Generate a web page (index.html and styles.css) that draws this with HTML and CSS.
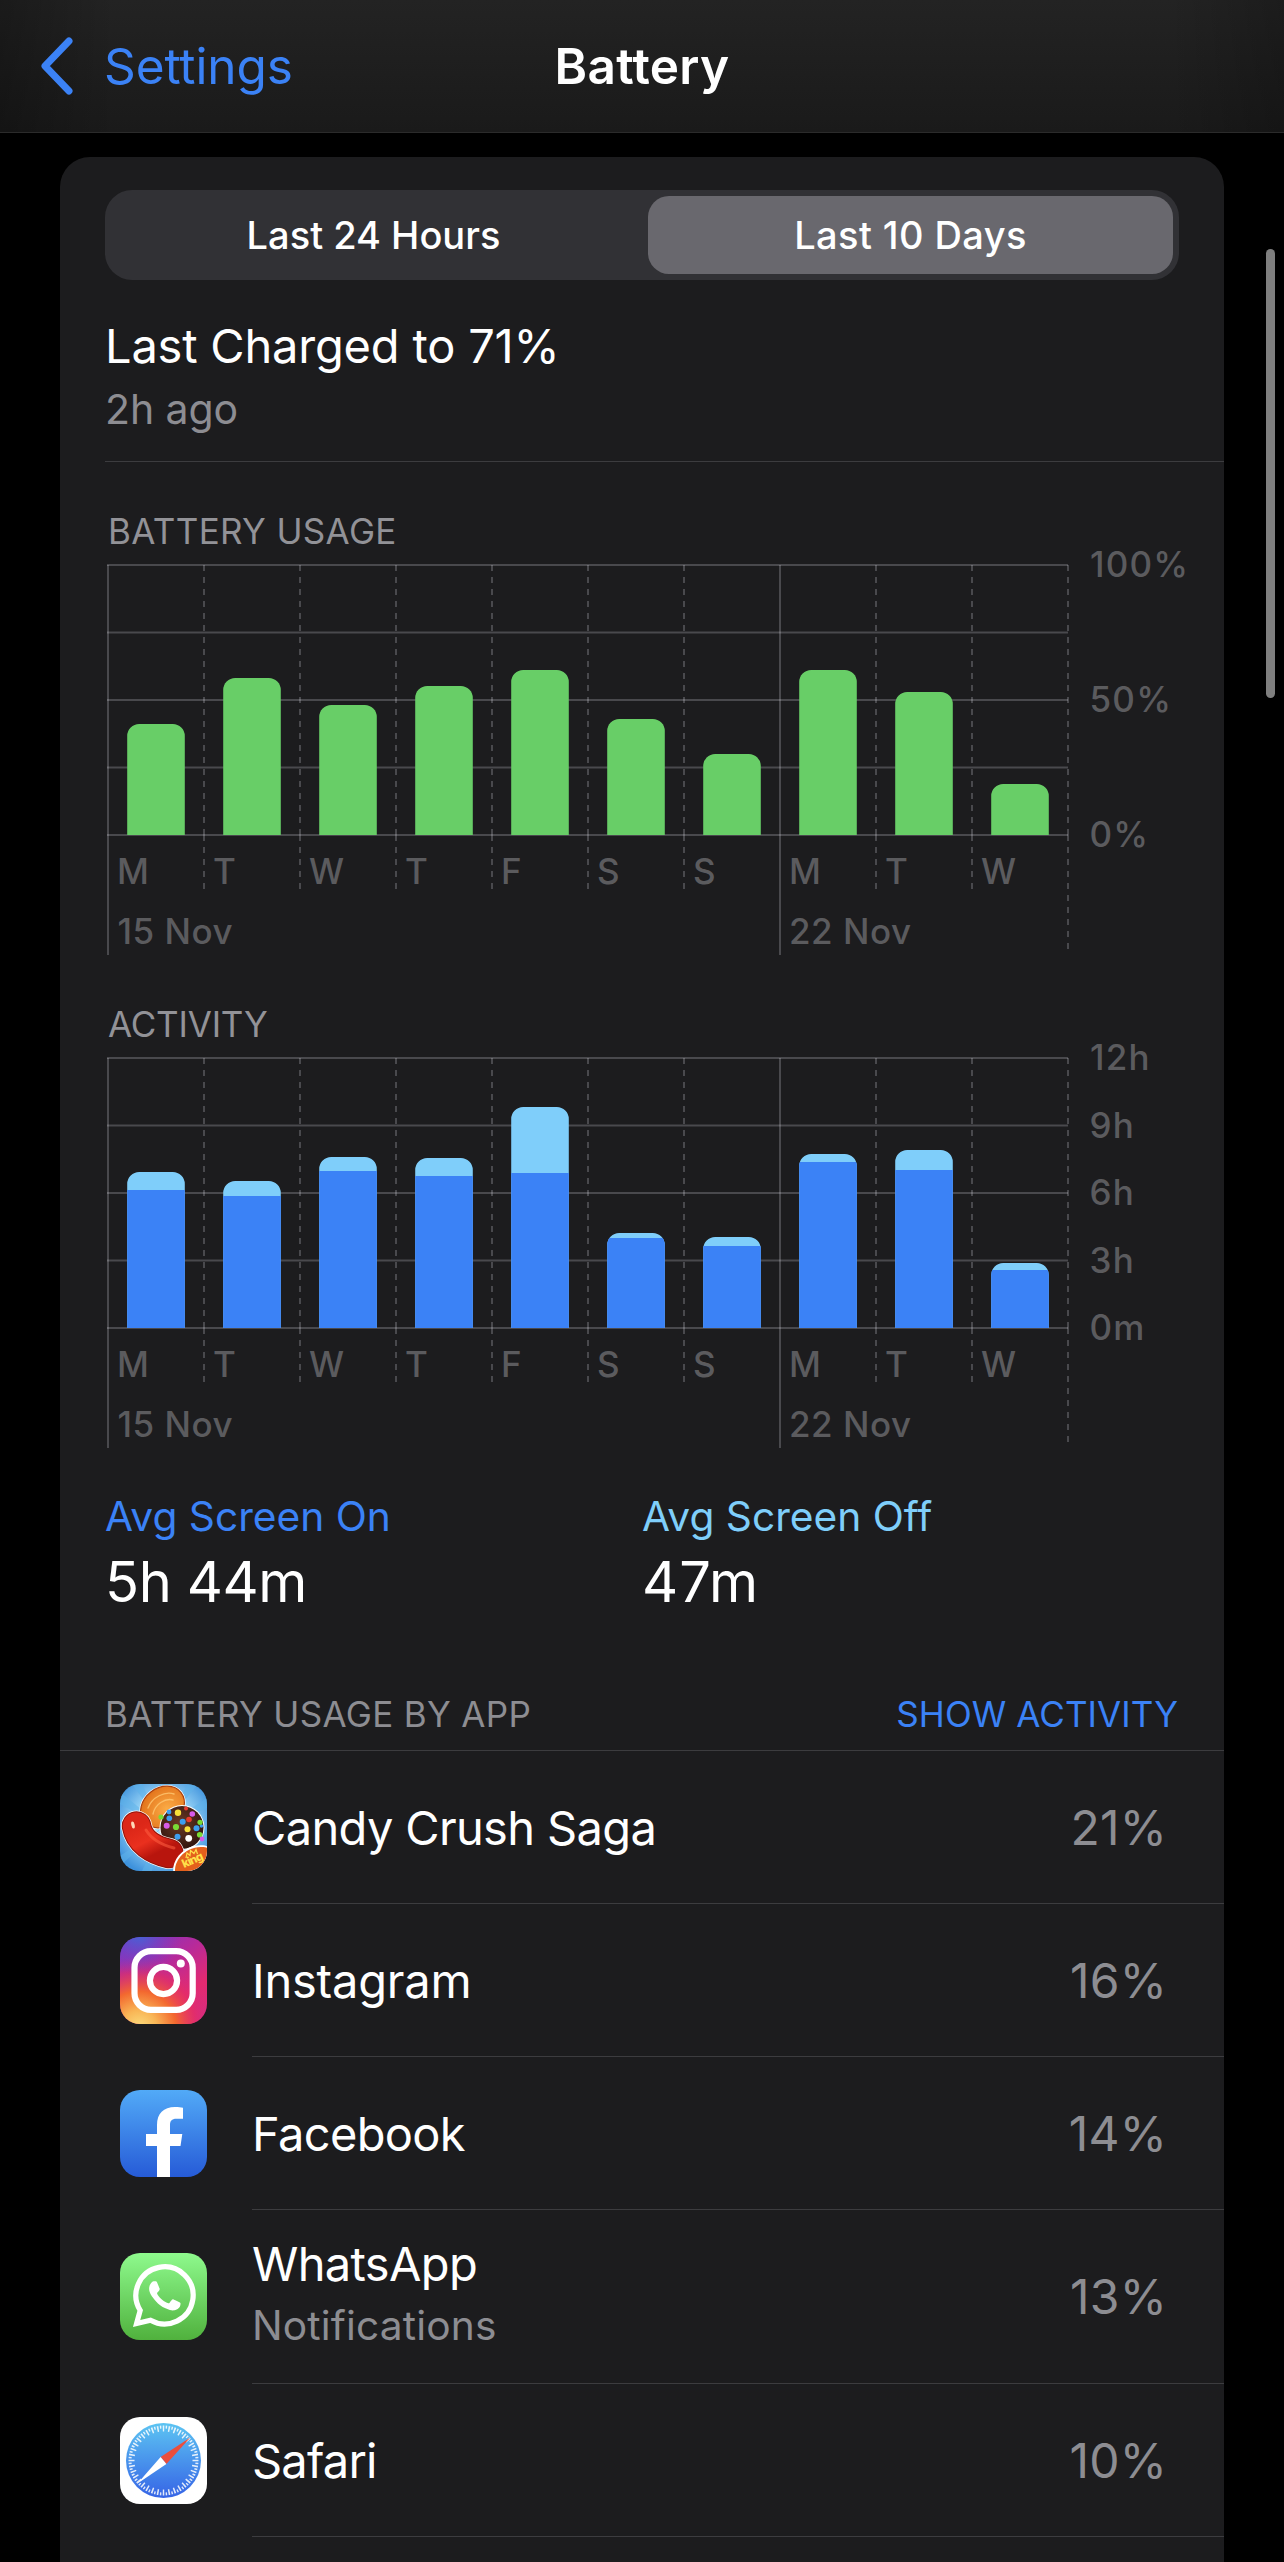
FILE: index.html
```html
<!DOCTYPE html>
<html lang="en">
<head>
<meta charset="utf-8">
<title>Battery</title>
<link rel="stylesheet" href="styles.css">
</head>
<body>
<header class="navbar">
  <a class="back">
    <svg class="chevron" width="36" height="60" viewBox="0 0 36 60"><path d="M31 5 L7 30 L31 55" fill="none" stroke="currentColor" stroke-width="7" stroke-linecap="round" stroke-linejoin="round"/></svg>
    <span>Settings</span>
  </a>
  <h1 class="title">Battery</h1>
</header>

<main class="card">
  <div class="segmented">
    <button class="segment">Last 24 Hours</button>
    <button class="segment segment-on">Last 10 Days</button>
  </div>

  <section class="charge">
    <p class="charge-title">Last Charged to 71%</p>
    <p class="charge-time">2h ago</p>
  </section>

  <section class="chart chart-usage">
    <h2 class="chart-title">BATTERY USAGE</h2>
    <svg class="plot" width="1117" height="404" viewBox="0 0 1117 404">
      <defs>
        <g id="grid">
          <path class="line" d="M0 14H961M0 81.5H961M0 149H961M0 216.5H961M0 284H961"/>
          <path class="line" d="M1 14V404M673 14V404"/>
          <path class="line dashed" d="M97 14V284M193 14V284M289 14V284M385 14V284M481 14V284M577 14V284M769 14V284M865 14V284M961 14V284"/>
          <path class="line dashed" d="M97 284V338M193 284V338M289 284V338M385 284V338M481 284V338M577 284V338M769 284V338M865 284V338M961 284V398"/>
        </g>
      </defs>
      <use href="#grid"/>
      <g class="bar-green">
        <path d="M20.2 284V185a12 12 0 0 1 12-12h33.6a12 12 0 0 1 12 12V284z"/>
        <path d="M116.2 284V139a12 12 0 0 1 12-12h33.6a12 12 0 0 1 12 12V284z"/>
        <path d="M212.2 284V166a12 12 0 0 1 12-12h33.6a12 12 0 0 1 12 12V284z"/>
        <path d="M308.2 284V147a12 12 0 0 1 12-12h33.6a12 12 0 0 1 12 12V284z"/>
        <path d="M404.2 284V131a12 12 0 0 1 12-12h33.6a12 12 0 0 1 12 12V284z"/>
        <path d="M500.2 284V180a12 12 0 0 1 12-12h33.6a12 12 0 0 1 12 12V284z"/>
        <path d="M596.2 284V215a12 12 0 0 1 12-12h33.6a12 12 0 0 1 12 12V284z"/>
        <path d="M692.2 284V131a12 12 0 0 1 12-12h33.6a12 12 0 0 1 12 12V284z"/>
        <path d="M788.2 284V153a12 12 0 0 1 12-12h33.6a12 12 0 0 1 12 12V284z"/>
        <path d="M884.2 284V245a12 12 0 0 1 12-12h33.6a12 12 0 0 1 12 12V284z"/>
      </g>
      <g class="label">
        <text x="10" y="333">M</text><text x="106" y="333">T</text><text x="202" y="333">W</text><text x="298" y="333">T</text><text x="394" y="333">F</text><text x="490" y="333">S</text><text x="586" y="333">S</text><text x="682" y="333">M</text><text x="778" y="333">T</text><text x="874" y="333">W</text>
        <text x="10.5" y="393">15 Nov</text><text x="682" y="393">22 Nov</text>
      </g>
      <g class="label axis">
        <text x="983" y="26">100%</text><text x="982.5" y="161">50%</text><text x="982.5" y="296">0%</text>
      </g>
    </svg>
  </section>

  <section class="chart chart-activity">
    <h2 class="chart-title chart-title-tight">ACTIVITY</h2>
    <svg class="plot" width="1117" height="404" viewBox="0 0 1117 404">
      <defs>
        <clipPath id="tops">
          <path d="M20.2 284V140a12 12 0 0 1 12-12h33.6a12 12 0 0 1 12 12V284z"/>
          <path d="M116.2 284V149a12 12 0 0 1 12-12h33.6a12 12 0 0 1 12 12V284z"/>
          <path d="M212.2 284V125a12 12 0 0 1 12-12h33.6a12 12 0 0 1 12 12V284z"/>
          <path d="M308.2 284V126a12 12 0 0 1 12-12h33.6a12 12 0 0 1 12 12V284z"/>
          <path d="M404.2 284V75a12 12 0 0 1 12-12h33.6a12 12 0 0 1 12 12V284z"/>
          <path d="M500.2 284V201a12 12 0 0 1 12-12h33.6a12 12 0 0 1 12 12V284z"/>
          <path d="M596.2 284V205a12 12 0 0 1 12-12h33.6a12 12 0 0 1 12 12V284z"/>
          <path d="M692.2 284V122a12 12 0 0 1 12-12h33.6a12 12 0 0 1 12 12V284z"/>
          <path d="M788.2 284V118a12 12 0 0 1 12-12h33.6a12 12 0 0 1 12 12V284z"/>
          <path d="M884.2 284V231a12 12 0 0 1 12-12h33.6a12 12 0 0 1 12 12V284z"/>
        </clipPath>
      </defs>
      <use href="#grid"/>
      <g clip-path="url(#tops)">
        <rect class="bar-off" width="961" height="284"/>
        <path class="bar-on" d="M0 284V146H97V284zM97 284V152H193V284zM193 284V127H289V284zM289 284V132H385V284zM385 284V129H481V284zM481 284V194H577V284zM577 284V202H673V284zM673 284V118H769V284zM769 284V126H865V284zM865 284V226H961V284z"/>
      </g>
      <g class="label">
        <text x="10" y="333">M</text><text x="106" y="333">T</text><text x="202" y="333">W</text><text x="298" y="333">T</text><text x="394" y="333">F</text><text x="490" y="333">S</text><text x="586" y="333">S</text><text x="682" y="333">M</text><text x="778" y="333">T</text><text x="874" y="333">W</text>
        <text x="10.5" y="393">15 Nov</text><text x="682" y="393">22 Nov</text>
      </g>
      <g class="label axis">
        <text x="983" y="26">12h</text><text x="982.5" y="93.5">9h</text><text x="982.5" y="161">6h</text><text x="982.5" y="228.5">3h</text><text x="982.5" y="296">0m</text>
      </g>
    </svg>
  </section>

  <section class="averages">
    <div class="average">
      <p class="average-name on">Avg Screen On</p>
      <p class="average-value">5h 44m</p>
    </div>
    <div class="average">
      <p class="average-name off">Avg Screen Off</p>
      <p class="average-value short">47m</p>
    </div>
  </section>

  <section class="apps">
    <header class="apps-head">
      <h2 class="apps-title">BATTERY USAGE BY APP</h2>
      <a class="apps-toggle">SHOW ACTIVITY</a>
    </header>

    <div class="app">
      <svg class="icon" viewBox="0 0 87 87">
        <defs>
          <radialGradient id="sky" cx=".5" cy=".45" r=".65"><stop offset=".4" stop-color="#a9e0fb"/><stop offset=".95" stop-color="#3e92dc"/></radialGradient>
          <radialGradient id="orange" cx=".55" cy=".6" r=".6"><stop offset="0" stop-color="#fbab45"/><stop offset="1" stop-color="#e3741c"/></radialGradient>
          <linearGradient id="bean" x1="0" y1="0" x2=".6" y2="1"><stop offset="0" stop-color="#dc2718"/><stop offset=".55" stop-color="#ea301e"/><stop offset="1" stop-color="#b8150d"/></linearGradient>
          <radialGradient id="choc" cx=".45" cy=".4" r=".6"><stop offset="0" stop-color="#6b3a26"/><stop offset="1" stop-color="#32160f"/></radialGradient>
          <clipPath id="tile"><rect width="87" height="87" rx="20"/></clipPath>
        </defs>
        <g clip-path="url(#tile)">
          <rect width="87" height="87" fill="url(#sky)"/>
          <path d="M43 43L0 8V20zM43 43L12 0H22zM43 43L68 0H78zM43 43L87 14V24zM43 43L0 72V82zM43 43L22 87H32z" fill="#5fb2ea" opacity=".55"/>
          <ellipse cx="42.5" cy="23" rx="24" ry="19.5" transform="rotate(-38 42.5 23)" fill="#fff" stroke="#fff" stroke-width="1.6"/>
          <ellipse cx="42.5" cy="23" rx="23.5" ry="19" transform="rotate(-38 42.5 23)" fill="url(#orange)" stroke="#a9400f" stroke-width="1.2"/>
          <path d="M28 24C32 13 45 7 54 10M33 30C35 20 45 14 53 16" fill="none" stroke="#ffc873" stroke-width="1.4" stroke-linecap="round" opacity=".8"/>
          <circle cx="62" cy="43.5" r="22.5" fill="#fff"/>
          <circle cx="62" cy="43.5" r="21.5" fill="url(#choc)"/>
          <g fill="#3d9df0"><circle cx="49.3" cy="34.3" r="2.8"/><circle cx="49" cy="28" r="2.4"/><circle cx="62.7" cy="37.7" r="3"/><circle cx="76.5" cy="44.3" r="3"/><circle cx="57.5" cy="52.7" r="3"/><circle cx="81.5" cy="42" r="1.8"/></g>
          <g fill="#f7df3a"><circle cx="58" cy="28.7" r="3.2"/><circle cx="67.5" cy="45.3" r="3"/></g>
          <g fill="#79dc35"><circle cx="56" cy="43" r="3.1"/><circle cx="80" cy="38.3" r="2.6"/><circle cx="79.7" cy="50.7" r="2.8"/><circle cx="41" cy="33" r="2.6"/></g>
          <g fill="#d65ae8"><circle cx="72.3" cy="30" r="2.8"/><circle cx="46.7" cy="41.7" r="3"/><circle cx="82" cy="55" r="2.4"/></g>
          <g fill="#e83a2c"><circle cx="69" cy="35.5" r="2.8"/><circle cx="66" cy="24.5" r="2"/></g>
          <circle cx="68.7" cy="54.3" r="3.4" fill="#fff"/>
          <path d="M16.5 42C19 57 33 66 49 69.500" fill="none" stroke="#fff" stroke-width="31" stroke-linecap="round"/>
          <path d="M16.5 42C19 57 33 66 49 69.500" fill="none" stroke="#8e120b" stroke-width="29.500" stroke-linecap="round"/>
          <path d="M16.5 42C19 57 33 66 49 69.500" fill="none" stroke="url(#bean)" stroke-width="27.500" stroke-linecap="round"/>
          <path d="M26 46C32 56 42 61 54 64" fill="none" stroke="#ff5f42" stroke-width="3" stroke-linecap="round" opacity=".55"/>
          <ellipse cx="13" cy="41" rx="1.700" ry="3.500" fill="#ffd9b8" transform="rotate(-12 13 41)"/>
          <ellipse cx="76" cy="82" rx="24" ry="19.500" transform="rotate(-32 76 82)" fill="#fff"/>
          <ellipse cx="76.500" cy="82.500" rx="22.700" ry="18.200" transform="rotate(-32 76.500 82.500)" fill="#e4601c"/>
          <path d="M66 74l1-5 3 2.500 .5-5 3.500 3 2-4 1.500 4.500" fill="none" stroke="#ffe14a" stroke-width="1.200"/>
          <text x="64" y="84" class="king" transform="rotate(-24 64 84)">king</text>
        </g>
      </svg>
      <div class="app-body">
        <div class="app-name">Candy Crush Saga</div>
        <div class="app-share">21%</div>
      </div>
    </div>

    <div class="app">
      <svg class="icon" viewBox="0 0 87 87">
        <defs>
          <linearGradient id="ig" x1=".1" y1="0" x2=".8" y2="1"><stop offset="0" stop-color="#7b36c4"/><stop offset=".4" stop-color="#b52a9c"/><stop offset=".75" stop-color="#e32a70"/><stop offset="1" stop-color="#d92c7c"/></linearGradient>
          <radialGradient id="igwarm" cx=".22" cy="1.05" r=".82"><stop offset="0" stop-color="#fbdf80"/><stop offset=".25" stop-color="#f9b656"/><stop offset=".52" stop-color="#f3682f"/><stop offset=".8" stop-color="#e62e63" stop-opacity=".6"/><stop offset="1" stop-color="#d32c85" stop-opacity="0"/></radialGradient>
          <radialGradient id="igcool" cx=".22" cy="-.05" r=".5"><stop offset="0" stop-color="#3f68d8"/><stop offset="1" stop-color="#7a38c6" stop-opacity="0"/></radialGradient>
        </defs>
        <rect width="87" height="87" rx="20" fill="url(#ig)"/>
        <rect width="87" height="87" rx="20" fill="url(#igwarm)"/>
        <rect width="87" height="87" rx="20" fill="url(#igcool)"/>
        <g fill="none" stroke="#fff" stroke-width="6.200">
          <rect x="14.500" y="14.200" width="58.200" height="58.600" rx="16.500"/>
          <circle cx="43.500" cy="43.500" r="13.600"/>
        </g>
        <circle cx="60.800" cy="26.500" r="4" fill="#fff"/>
      </svg>
      <div class="app-body">
        <div class="app-name loose">Instagram</div>
        <div class="app-share">16%</div>
      </div>
    </div>

    <div class="app">
      <svg class="icon" viewBox="0 0 87 87">
        <defs><linearGradient id="fb" x2="0" y2="1"><stop offset="0" stop-color="#52aaf7"/><stop offset="1" stop-color="#265bd7"/></linearGradient></defs>
        <rect width="87" height="87" rx="20" fill="url(#fb)"/>
        <path d="M63 28.700H56.500C51.500 28.700 50 31 50 35V44H62.300L60.500 56H50V87H37V56H26V44H37V35C37 23.500 43.500 17 55 17C58.500 17 61 17.300 63 17.700Z" fill="#fff"/>
      </svg>
      <div class="app-body">
        <div class="app-name">Facebook</div>
        <div class="app-share">14%</div>
      </div>
    </div>

    <div class="app app-tall">
      <svg class="icon" viewBox="0 0 87 87">
        <defs><linearGradient id="wa" x2="0" y2="1"><stop offset="0" stop-color="#8efa8d"/><stop offset="1" stop-color="#50b13d"/></linearGradient></defs>
        <rect width="87" height="87" rx="20" fill="url(#wa)"/>
        <path d="M16.600 70.500L20.200 57.400A28.600 28.600 0 1 1 30.500 67.300Z" fill="none" stroke="#fff" stroke-width="5.200"/>
        <path transform="translate(13.500 11.600) scale(2.600)" fill="#fff" d="M17.472 14.382c-.297-.149-1.758-.867-2.030-.967-.273-.099-.471-.148-.670.150-.197.297-.767.966-.940 1.164-.173.199-.347.223-.644.075-.297-.150-1.255-.463-2.390-1.475-.883-.788-1.480-1.761-1.653-2.059-.173-.297-.018-.458.130-.606.134-.133.298-.347.446-.520.149-.174.198-.298.298-.497.099-.198.050-.371-.025-.520-.075-.149-.669-1.612-.916-2.207-.242-.579-.487-.500-.669-.510-.173-.008-.371-.010-.570-.010-.198 0-.520.074-.792.372-.272.297-1.040 1.016-1.040 2.479 0 1.462 1.065 2.875 1.213 3.074.149.198 2.096 3.200 5.077 4.487.709.306 1.262.489 1.694.625.712.227 1.360.195 1.871.118.571-.085 1.758-.719 2.006-1.413.248-.694.248-1.289.173-1.413-.074-.124-.272-.198-.570-.347z"/>
      </svg>
      <div class="app-body">
        <div class="app-text">
          <div class="app-name">WhatsApp</div>
          <div class="app-note">Notifications</div>
        </div>
        <div class="app-share">13%</div>
      </div>
    </div>

    <div class="app">
      <svg class="icon" viewBox="0 0 87 87">
        <defs><linearGradient id="sf" x2="0" y2="1"><stop offset="0" stop-color="#5cc4f2"/><stop offset="1" stop-color="#3664e6"/></linearGradient></defs>
        <rect width="87" height="87" rx="20" fill="#fff"/>
        <circle cx="43.500" cy="43.500" r="37.500" fill="url(#sf)"/>
        <g fill="none" stroke="#fff" opacity=".85">
          <circle cx="43.500" cy="43.500" r="32" stroke-width="6" pathLength="72" stroke-dasharray=".55 1.450" stroke-dashoffset=".275"/>
          <circle cx="43.500" cy="43.500" r="33.500" stroke-width="3" pathLength="72" stroke-dasharray=".5 1.500" stroke-dashoffset="1.250"/>
        </g>
        <path d="M70.300 20.500L40.600 40.100L46.400 47Z" fill="#ea4e3d"/>
        <path d="M17.500 66.500L40.600 40.100L46.400 47Z" fill="#fff"/>
      </svg>
      <div class="app-body">
        <div class="app-name safari">Safari</div>
        <div class="app-share">10%</div>
      </div>
    </div>
  </section>
</main>
<div class="scrollbar"></div>
</body>
</html>
```
FILE: styles.css
```css
* { box-sizing: border-box; margin: 0; padding: 0; }

html, body {
  height: 2562px;
  overflow: hidden;
}

body {
  position: relative;
  width: 1284px;
  background: #000;
  color: #fff;
  font-family: Inter, "Liberation Sans", sans-serif;
  font-size: 47px;
  line-height: 56px;
}

h1, h2 { font-weight: 400; }

/* Navigation bar */
.navbar {
  display: grid;
  grid-template-columns: 1fr auto 1fr;
  align-items: center;
  height: 133px;
  padding-left: 38px;
  border-bottom: 1px solid #2b2b2b;
  background:
    linear-gradient(90deg, rgba(0, 0, 0, .25), transparent 9%, transparent 91%, rgba(0, 0, 0, .2)),
    linear-gradient(#232323, #1a1a1a);
  font-size: 49.5px;
}

.back {
  display: flex;
  align-items: center;
  gap: 30px;
  color: #3b82f6;
  letter-spacing: -.1px;
}

.chevron { display: block; }

.title {
  margin-left: -38px;
  font-size: 49.5px;
  font-weight: 600;
  letter-spacing: .3px;
}

/* Card */
.card {
  width: 1164px;
  height: 2405px;
  margin: 24px 60px 0;
  padding-top: 33px;
  border-radius: 30px 30px 0 0;
  background: #1c1c1e;
}

.segmented {
  display: grid;
  grid-template-columns: 537px 525px;
  width: 1074px;
  height: 90px;
  margin-left: 45px;
  padding: 6px 6px 6px 0;
  column-gap: 6px;
  border-radius: 27px;
  background: #313135;
}

.segment {
  border: 0;
  border-radius: 21px;
  background: none;
  color: inherit;
  font: 500 38px/56px Inter, sans-serif;
  letter-spacing: 0;
}

.segment-on {
  background: #69686e;
  letter-spacing: .4px;
}

.charge {
  margin-left: 45px;
  padding: 38px 0 27px;
  border-bottom: 1px solid #3c3c3f;
}

.charge-title { letter-spacing: -.2px; }

.charge-time {
  margin-top: 10px;
  color: #8d8d92;
  font-size: 41px;
  line-height: 50px;
  letter-spacing: -.1px;
}

/* Charts */
.chart { margin-left: 47px; }
.chart-usage { margin-top: 49px; }
.chart-activity { margin-top: 49px; }

.chart-title {
  padding-left: 1px;
  color: #929297;
  font-size: 35px;
  line-height: 40px;
  letter-spacing: .35px;
}

.chart-title-tight { letter-spacing: -.2px; }

.plot { display: block; overflow: visible; }
.line { fill: none; stroke: #ebebf5; stroke-opacity: .22; stroke-width: 2; }
.dashed { stroke-dasharray: 6 6; }
.bar-green { fill: #68ce67; }
.bar-on { fill: #3b82f6; }
.bar-off { fill: #7fcefa; }
.label { fill: #5b5b5e; font-size: 35px; font-weight: 500; letter-spacing: .5px; }
.axis { letter-spacing: 1.2px; }

/* Averages */
.averages {
  display: grid;
  grid-template-columns: 537px 1fr;
  margin-top: 44px;
  padding-left: 45px;
}

.average-name { font-size: 40.7px; line-height: 50px; }
.on { color: #3b82f6; }
.off { color: #7fcefa; }

.average-value {
  margin-top: 7px;
  font-size: 56px;
  line-height: 66px;
  letter-spacing: -.4px;
}

.short { letter-spacing: 1px; }

/* App list */
.apps { margin-top: 79px; }

.apps-head {
  display: flex;
  justify-content: space-between;
  padding: 0 46px 16px 45px;
  border-bottom: 1px solid #3c3c3f;
  font-size: 35px;
  line-height: 40px;
}

.apps-title { color: #8d8d92; font-size: 35px; letter-spacing: .34px; }
.apps-toggle { color: #3b82f6; letter-spacing: .08px; }

.app {
  display: flex;
  height: 153px;
  padding-left: 60px;
}

.app-tall { height: 174px; }

.icon {
  flex: none;
  width: 87px;
  height: 87px;
  margin-top: 33px;
}

.app-tall .icon { margin-top: 43px; }

.app-body {
  display: flex;
  flex: 1;
  align-items: center;
  justify-content: space-between;
  margin-left: 45px;
  padding: 1px 57px 0 0;
  border-bottom: 1px solid #3c3c3f;
}

.app-text { padding-bottom: 7px; }
.app-name { letter-spacing: -.65px; }
.app-name.loose { letter-spacing: -.2px; }
.app-name.safari { letter-spacing: -.8px; }

.app-note {
  margin-top: 9px;
  color: #8d8d92;
  font-size: 40.7px;
  line-height: 50px;
  letter-spacing: .15px;
}

.app-share {
  color: #8d8d92;
  font-size: 48px;
  letter-spacing: .2px;
}

.king { fill: #ffe14a; font-size: 11.5px; font-weight: 800; letter-spacing: -.9px; }

.scrollbar {
  position: absolute;
  top: 249px;
  left: 1266px;
  width: 9px;
  height: 449px;
  border-radius: 4.5px;
  background: #7f7f7f;
}
```
